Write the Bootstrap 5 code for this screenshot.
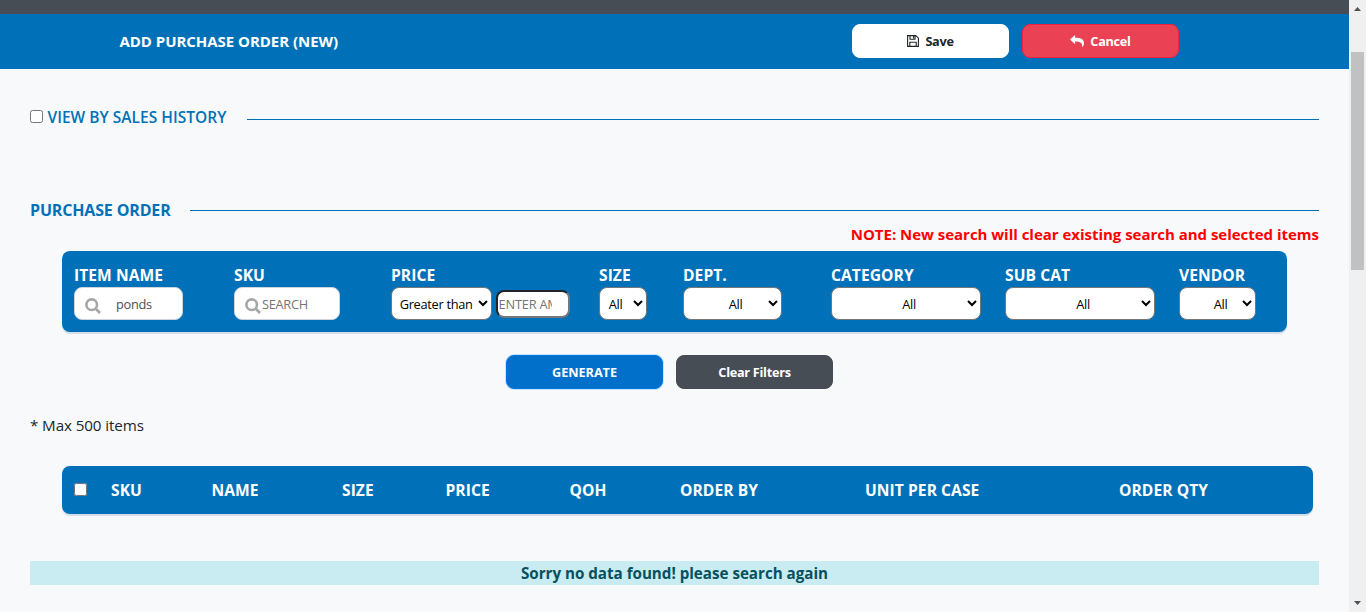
<!DOCTYPE html>
<html lang="en">
<head>
<meta charset="utf-8">
<meta name="viewport" content="width=device-width, initial-scale=1">
<title>Add Purchase Order</title>
<link rel="stylesheet" href="https://cdn.jsdelivr.net/npm/bootstrap@5.3.0/dist/css/bootstrap.min.css">
<style>
  :root { --brand: #0071b9; --slate: #474d54; }
  body { background: #f8f9fb; color: #212529; font-family: "Open Sans", "Noto Sans", sans-serif; font-size: 16px; }
  input, select, button { letter-spacing: inherit; }
  .top-strip { height: 14px; background: var(--slate); }
  .title-bar { height: 55px; background: var(--brand); padding: 0 170px 1px 119.5px; }
  .page-title { font-size: 15px; letter-spacing: -.04px; padding-bottom: 1px; }
  .action-btn { width: 157px; height: 34px; padding: 0; border-radius: 8px; font-size: 12.7px; font-weight: 700; letter-spacing: -.28px; line-height: 14px; }
  .action-btn svg { margin: 0 6px 0 0; }
  .btn-save, .btn-save:hover { background: #fff; color: #212529; border-color: #fff; }
  .btn-cancel { background: #ea4254; color: #fff; border-color: #f0213c; }
  .btn-generate { background: #0070cb; color: #fff; border-color: #0077e0; letter-spacing: -.05px; box-shadow: 0 0 0 1px #c5e2fa; }
  .btn-clear { background: var(--slate); color: #fff; border-color: var(--slate); }
  .page-main { padding: 0 30px; }
  .section-title { color: var(--brand); height: 24px; line-height: 24px; letter-spacing: -.16px; white-space: nowrap; }
  .section-title .rule { height: 1px; background: var(--brand); }
  .first-section { margin-top: 37px; letter-spacing: .02px; font-size: 15.5px; }
  .first-section label { margin: 0 20.5px 2px 4.5px; font-weight: 600; }
  .first-section .rule { margin-top: 3px; }
  .second-section { margin-top: 68px; }
  .box13 { width: 13px; height: 13px; margin: 0 0 3px; }
  .note-text { height: 24px; line-height: 24px; color: #f00; font-size: 15px; letter-spacing: -.02px; }
  .panel { background: var(--brand); color: #fff; border-radius: 8px; box-shadow: 0 2px 1px #d3dce8; }
  .filters { display: grid; grid-template-columns: 160px 157px 208px 84px 148px 174px 174px 96px; width: 1225px; height: 81px; margin: 5px 0 0 32px; padding: 12px 0 0 12px; }
  .filters label { display: block; height: 24px; line-height: 24px; font-weight: 700; font-size: 15.6px; letter-spacing: .06px; }
  .field { height: 33px; border-radius: 8px; border: 1px solid #767676; background: #fff; color: #000; font-size: 12.8px; letter-spacing: -.3px; }
  select.field { text-align: center; padding: 1px 0 0 2px; margin-left: -.4px; }
  select.wide { padding-left: 19px; }
  select.snug { padding-left: 0; padding-right: 2px; }
  .search-field { border-color: #ced4da; color: #495057; }
  .search-field svg { width: 16px; height: 16px; margin: 5px 0 0 10px; flex: none; }
  .search-field input { border: 0; outline: 0; padding: 2px 0 0; background: none; color: #495057; min-width: 0; margin-left: 1px; }
  .search-field .filled { margin-left: 15px; }
  .search-field input::placeholder, .amount::placeholder { color: #757575; opacity: 1; }
  .amount { width: 74px; height: 28px; margin: 3px 0 0 4px; padding: 1px 1px; border: 2px solid; border-color: #212529 #767676 #767676 #212529; border-radius: 8px; background: #fff; font-size: 12.8px; letter-spacing: -.22px; }
  .form-actions { margin: 23px 0 0 476px; gap: 13px; }
  .max-note { height: 24px; line-height: 24px; margin-top: 24px; font-size: 15.2px; letter-spacing: -.1px; }
  .items-head { display: grid; grid-template-columns: 37px 100.5px 130.5px 103.5px 124px 110.5px 185px 254px 1fr; width: 1251px; height: 48px; margin: 29px 0 0 32px; padding: 1px 0 0 12px; align-items: center; font-weight: 700; font-size: 15.6px; letter-spacing: .06px; white-space: nowrap; }
  .empty-alert { height: 24px; line-height: 24px; margin-top: 47px; background: #c8ecf2; color: #055160; font-weight: 700; font-size: 15.2px; letter-spacing: -.02px; text-align: center; }
  .scroll-rail { width: 17px; background: #f0f0f0; }
  .scroll-rail .thumb { width: 13px; height: 218px; margin: 41px 1px auto 0; background: #c1c1c1; }
  .scroll-rail svg { margin: 7px 0; }
</style>
</head>
<body class="vh-100 overflow-hidden d-flex">
  <div class="flex-grow-1">
    <div class="top-strip"></div>
    <header class="title-bar d-flex align-items-center">
      <h1 class="page-title fw-bold text-white mb-0 me-auto">ADD PURCHASE ORDER (NEW)</h1>
      <div class="d-flex" style="gap:13px">
        <button class="btn action-btn btn-save d-flex align-items-center justify-content-center">
          <svg width="12" height="12" viewBox="0 0 12 12" fill="none" stroke="#212529" stroke-width="1.1"><path d="M.6.6H8.8L11.4 3.2V11.4H.6Z"/><path d="M3 .8V4.2H8V.8M2.8 11.2V7.2H9.2V11.2"/><path d="M6.6 1V3.6"/></svg>Save
        </button>
        <button class="btn action-btn btn-cancel d-flex align-items-center justify-content-center">
          <svg width="14" height="12" viewBox="0 0 14 12" fill="#fff"><path d="M0 4.6 5.1 0V2.8C10 2.8 14 3.8 14 8.2 14 9.9 13.1 11.2 12.3 12 12.2 12 12 12 12 11.7 12.7 7.9 10.6 6.4 5.1 6.4V9.2Z"/></svg>Cancel
        </button>
      </div>
    </header>

    <main class="page-main">
      <div class="section-title first-section d-flex align-items-center">
        <input type="checkbox" class="box13" id="history">
        <label for="history">VIEW BY SALES HISTORY</label>
        <span class="rule flex-grow-1"></span>
      </div>
      <div class="section-title second-section d-flex align-items-center fw-bold">
        <span style="margin-right:19px">PURCHASE ORDER</span><span class="rule flex-grow-1"></span>
      </div>
      <div class="note-text fw-bold text-end">NOTE: New search will clear existing search and selected items</div>

      <section class="panel filters">
        <div><label>ITEM NAME</label>
          <div class="field search-field d-flex align-items-center" style="width:109px">
            <svg viewBox="0 0 16 16" fill="none" stroke="#a6a6a6" stroke-width="2.6"><circle cx="6.7" cy="6.7" r="5.3"/><path d="M10.5 10.5 15 15"/></svg>
            <input type="text" class="filled" value="ponds" style="width:60px">
          </div>
        </div>
        <div><label>SKU</label>
          <div class="field search-field d-flex align-items-center" style="width:106px">
            <svg viewBox="0 0 16 16" fill="none" stroke="#a6a6a6" stroke-width="2.6"><circle cx="6.7" cy="6.7" r="5.3"/><path d="M10.5 10.5 15 15"/></svg>
            <input type="text" placeholder="SEARCH" style="width:70px">
          </div>
        </div>
        <div><label>PRICE</label>
          <div class="d-flex align-items-start">
            <select class="field" style="width:101px"><option>Greater than</option></select>
            <input type="number" class="amount" placeholder="ENTER AMOUNT">
          </div>
        </div>
        <div><label>SIZE</label><select class="field snug" style="width:48px"><option>All</option></select></div>
        <div><label>DEPT.</label><select class="field wide" style="width:99px"><option>All</option></select></div>
        <div><label>CATEGORY</label><select class="field wide" style="width:150px"><option>All</option></select></div>
        <div><label>SUB CAT</label><select class="field wide" style="width:150px"><option>All</option></select></div>
        <div><label>VENDOR</label><select class="field wide" style="width:77px"><option>All</option></select></div>
      </section>

      <div class="form-actions d-flex">
        <button class="btn action-btn btn-generate">GENERATE</button>
        <button class="btn action-btn btn-clear">Clear Filters</button>
      </div>
      <div class="max-note">* Max 500 items</div>

      <div class="panel items-head">
        <input type="checkbox" class="box13">
        <span>SKU</span><span>NAME</span><span>SIZE</span><span>PRICE</span><span>QOH</span><span>ORDER BY</span><span>UNIT PER CASE</span><span>ORDER QTY</span>
      </div>
      <div class="empty-alert">Sorry no data found! please search again</div>
    </main>
  </div>

  <aside class="scroll-rail d-flex flex-column align-items-center flex-shrink-0">
    <svg width="7" height="4" viewBox="0 0 7 4" fill="#505050" class="flex-shrink-0 mb-0"><path d="M3.5 0 7 4H0Z"/></svg>
    <div class="thumb"></div>
    <svg width="7" height="4" viewBox="0 0 7 4" fill="#505050" class="flex-shrink-0"><path d="M0 0H7L3.5 4Z"/></svg>
  </aside>
  <script src="https://cdn.jsdelivr.net/npm/bootstrap@5.3.0/dist/js/bootstrap.bundle.min.js"></script>
</body>
</html>
